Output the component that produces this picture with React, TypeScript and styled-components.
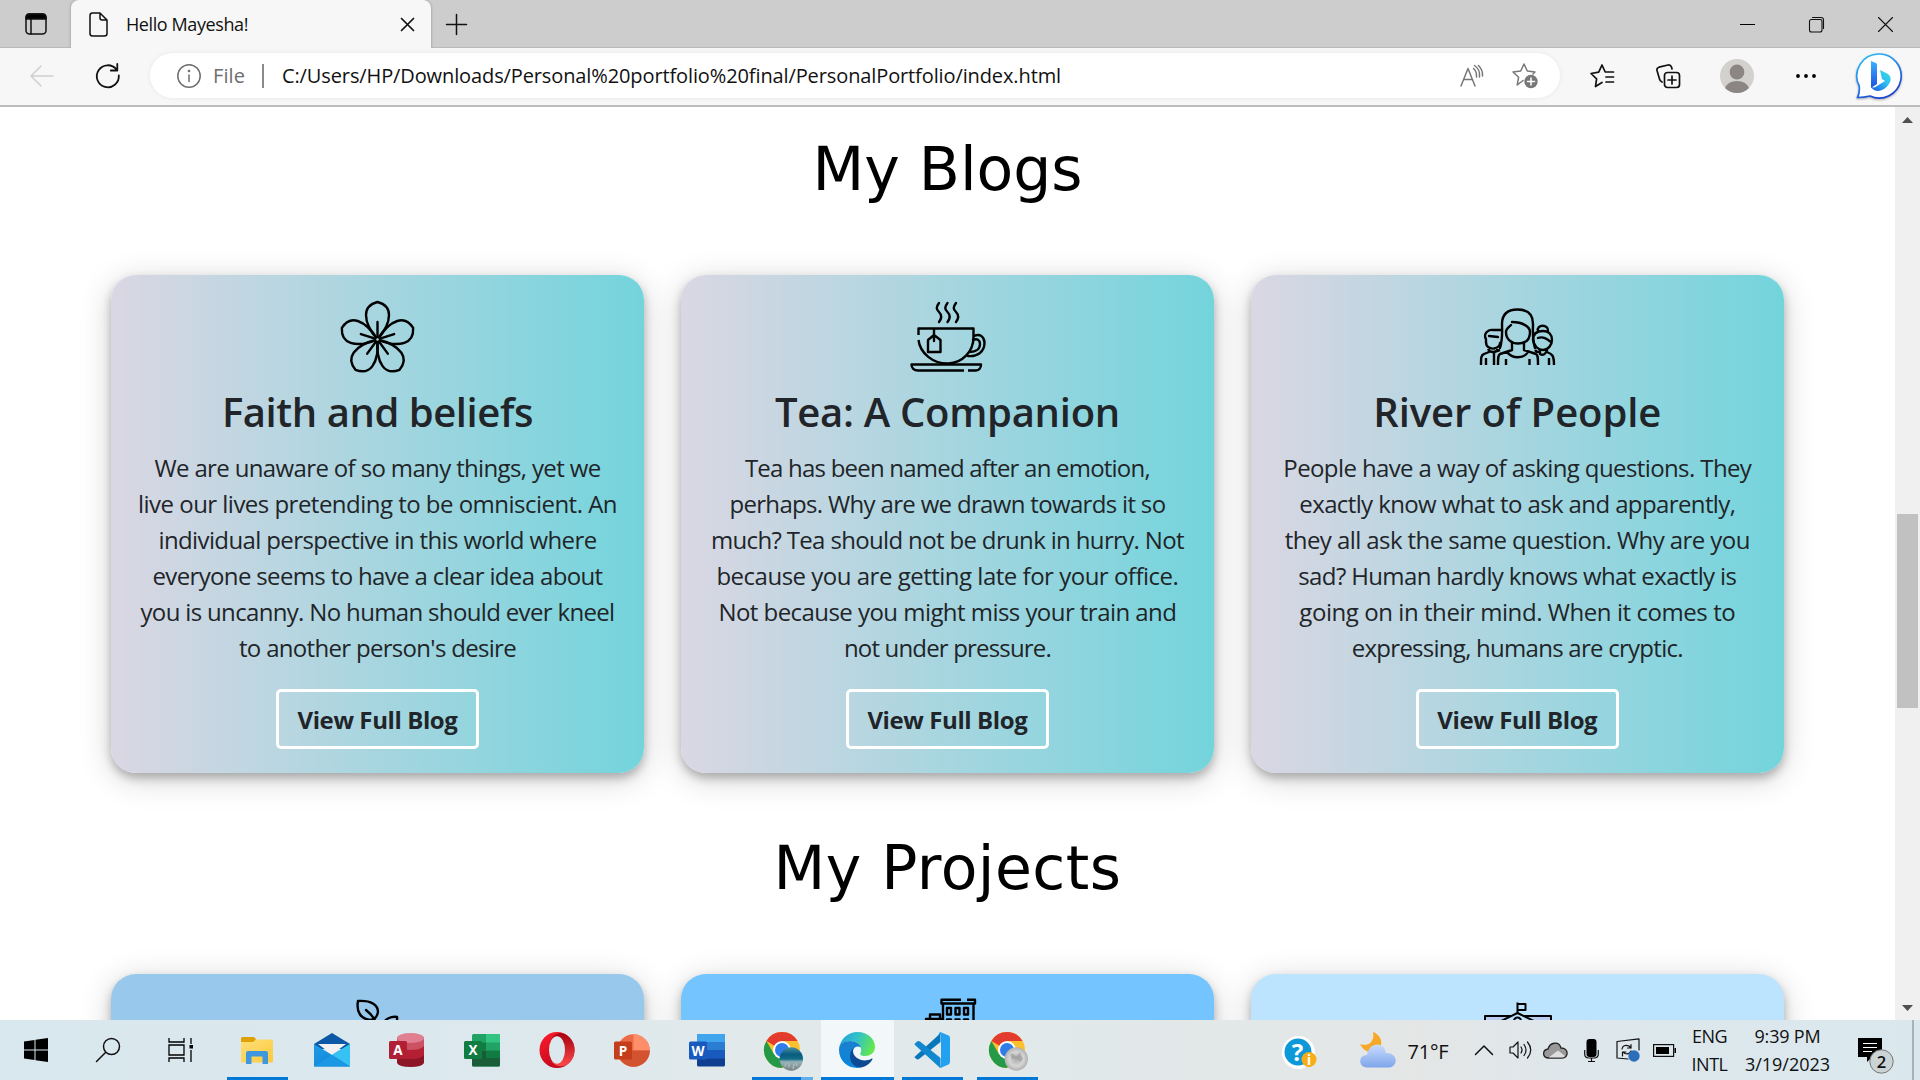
import React, { useLayoutEffect, useRef, useState } from "react";
import styled, { createGlobalStyle } from "styled-components";

const GlobalStyle = createGlobalStyle`
  *, *::before, *::after { box-sizing: border-box; }
  html, body { margin: 0; padding: 0; overflow: hidden; background: #fff; }
  body { font-family: "Open Sans", "Noto Sans", sans-serif; color: #212529; }
  svg { display: block; flex: none; overflow: visible; }
`;

/* ---------- text that tracks itself to a given measure ---------- */

const FitSpan = styled.span`
  display: inline-block;
  white-space: nowrap;
`;

function Fit({ children, width }: { children: string; width: number }) {
  const ref = useRef<HTMLSpanElement>(null);
  const [spacing, setSpacing] = useState(0);
  useLayoutEffect(() => {
    if (ref.current) {
      const natural = ref.current.getBoundingClientRect().width;
      setSpacing((width - natural) / children.length);
    }
  }, [children, width]);
  return (
    <FitSpan ref={ref} style={{ letterSpacing: `${spacing.toFixed(3)}px` }}>
      {children}
    </FitSpan>
  );
}

/* ---------- window ---------- */

const Screen = styled.div`
  width: 1920px;
  height: 1080px;
  display: grid;
  grid-template-columns: 1920px;
  grid-template-rows: 48px 59px 913px 60px;
  overflow: hidden;
`;

const TabStrip = styled.header`
  display: flex;
  background: #cdcdcd;
  box-shadow: inset 0 -1px 0 #b9b9b9;
`;

const Slot = styled.div<{ $w: number; $h?: number; $drop?: number }>`
  width: ${(p) => p.$w}px;
  ${(p) => (p.$h ? `height: ${p.$h}px;` : "")}
  padding-top: ${(p) => p.$drop || 0}px;
  flex: none;
  display: flex;
  align-items: center;
  justify-content: center;
`;

const Tab = styled.div`
  width: 360px;
  height: 48px;
  display: flex;
  align-items: center;
  padding-left: 18px;
  background: #f7f7f7;
  border-radius: 8px 8px 0 0;
  box-shadow: 0 0 3px rgba(0, 0, 0, 0.3);
  clip-path: inset(0 -4px 0 -4px);
`;

const TabTitle = styled.div`
  flex: 1;
  margin-left: 18px;
  padding-bottom: 1px;
  font-size: 18px;
  line-height: 24px;
  color: #111;
`;

const Spacer = styled.div`
  flex: 1;
`;

const Toolbar = styled.div`
  display: flex;
  align-items: center;
  padding-bottom: 2px;
  background: #f7f7f7;
  border-bottom: 2px solid #bdbdbd;
`;

const AddressBar = styled.div`
  width: 1410px;
  height: 45px;
  flex: none;
  display: flex;
  align-items: center;
  padding: 1px 8px 0 27px;
  border-radius: 23px;
  background: #fff;
  box-shadow: 0 0 5px rgba(0, 0, 0, 0.07);
  font-size: 20px;
  line-height: 28px;
  color: #111;
`;

const Scheme = styled.span`
  margin-left: 12px;
  color: #6e6e6e;
`;

const Divider = styled.i`
  width: 2px;
  height: 24px;
  margin: 0 18px 0 17px;
  background: #8a8a8a;
`;

/* ---------- page ---------- */

const Viewport = styled.div`
  display: grid;
  grid-template-columns: 1895px 25px;
  overflow: hidden;
`;

const Page = styled.main`
  height: 913px;
  overflow: hidden;
  background: #fff;
`;

const SectionTitle = styled.h1<{ $top: number; $track?: number }>`
  margin: 0;
  padding: ${(p) => p.$top}px 0 70px;
  font: 400 60px/72px Verdana, "DejaVu Sans", sans-serif;
  letter-spacing: ${(p) => p.$track || 0}px;
  text-align: center;
  color: #000;
`;

const CardRow = styled.div`
  display: grid;
  grid-template-columns: repeat(3, 533.4px);
  justify-content: space-between;
  padding: 0 111px 0 110.8px;
`;

const Card = styled.article<{ $fill: string }>`
  height: 498px;
  padding-top: 24.5px;
  display: flex;
  flex-direction: column;
  align-items: center;
  border-radius: 25px;
  background: ${(p) => p.$fill};
  box-shadow: 0 5px 10px rgba(0, 0, 0, 0.25), 0 6px 32px rgba(0, 0, 0, 0.18);
`;

const CardTitle = styled.h2`
  margin: 13px 0 14.5px;
  font-size: 40px;
  font-weight: 600;
  line-height: 48px;
`;

const CardText = styled.p`
  margin: 0 0 22.5px;
  display: flex;
  flex-direction: column;
  align-items: center;
  font-size: 24px;
  line-height: 36px;
`;

const BlogButton = styled.button`
  width: 203px;
  height: 60px;
  padding: 2px 0 0;
  border: 3px solid #fff;
  border-radius: 5px;
  background: transparent;
  color: #212529;
  font: 700 24px/36px "Open Sans", "Noto Sans", sans-serif;
`;

const ScrollTrack = styled.aside`
  height: 913px;
  display: flex;
  flex-direction: column;
  align-items: center;
  background: #f0f0f0;
`;

const Thumb = styled.div`
  width: 21px;
  height: 194px;
  margin-top: 381px;
  margin-bottom: auto;
  background: #c1c1c1;
`;

/* ---------- taskbar ---------- */

const Taskbar = styled.footer`
  display: flex;
  background: linear-gradient(90deg, #d9e8ee 0, #dbe8ee 420px, #e1e9eb 720px, #e1e9ea 1050px, #e4e6e6 1420px, #dde7ec 1600px, #dae8ed 1920px);
`;

const AppSlot = styled.div<{ $line?: string; $active?: boolean }>`
  width: 73px;
  height: 60px;
  margin: 0 1px;
  padding-right: 2px;
  flex: none;
  display: flex;
  align-items: center;
  justify-content: center;
  background: ${(p) =>
    `linear-gradient(90deg, ${p.$line || "transparent, transparent"}) center bottom / ${p.$active ? 73 : 61}px 3px no-repeat, ${p.$active ? "#f2f7f9" : "transparent"}`};
`;

const TrayText = styled.div<{ $size: number; $w: number; $drop: number }>`
  width: ${(p) => p.$w}px;
  padding-top: ${(p) => p.$drop}px;
  flex: none;
  display: flex;
  flex-direction: column;
  justify-content: center;
  align-items: center;
  font-size: ${(p) => p.$size}px;
  line-height: 27.5px;
  color: #111;
`;

const DesktopEdge = styled.i`
  width: 2px;
  height: 60px;
  margin-right: 6px;
  background: #a5b4bb;
`;

/* ---------- card drawings ---------- */

const line = { fill: "none", stroke: "#000", strokeWidth: 2.4, strokeLinecap: "round", strokeLinejoin: "round" } as const;

const Flower = () => (
  <svg width="75" height="75" viewBox="0 0 75 75" {...line}>
    {[0, 72, 144, 216, 288].map((a) => (
      <g key={a} transform={`rotate(${a} 37.5 39.5)`}>
        <path d="M37.5 39.500C31 32 26 24 26 15C26 8 30 4 37.5 2C45 4 49 8 49 15C49 24 44 32 37.5 39.500Z" />
        <path d="M37.5 37V22" />
      </g>
    ))}
    <circle cx="37.5" cy="39.500" r="1.2" fill="#b5dfe5" stroke="none" />
  </svg>
);

const Tea = () => (
  <svg width="75" height="75" viewBox="0 0 75 75" {...line}>
    <path d="M29 3c-3 4-3 6 0 9s3 6 0 10M37.5 3c-3 4-3 6 0 9s3 6 0 10M46 3c-3 4-3 6 0 9s3 6 0 10" />
    <path d="M8.500 35V28.500H63.500V37C63.500 52 52 63 38.500 63.500C23 64 10 53 8.500 40" strokeLinecap="butt" />
    <path d="M64 36C70 33 74.500 37 74.500 43C74.500 52 67 57 58 56M63 40C67 38 70 40 70 44C70 49 66 52 60 52" />
    <path d="M24 29V41M18 40L24 35L30.500 40V52H18Z" strokeLinejoin="round" />
    <path d="M54 70.500H8C4 70.500 1.500 68 1.500 64.500H71C71 68 69 70.500 66 70.500H58" strokeLinecap="butt" />
  </svg>
);

const People = () => (
  <svg width="75" height="75" viewBox="0 0 75 75" {...line}>
    <path d="M20 48C23 38 22 30 22 24C22 14 28 9.500 37.500 9.500S53 14 53 24C53 30 52 38 55 48" />
    <path d="M32 22C43 22 50 27 50 32C50 40 45 43.500 38 43.500S26 39 26 32C26 29 28 28 31 25" />
    <path d="M32 43V50L20 54C18 55 18 58 18 65M44 43V50L56 54C58 55 58 58 58 65M27 52C32 59 44 59 48 52M26 59V65M49.500 59V65" strokeLinecap="butt" />
    <path d="M21 30H13C8 29 3 34 6 39V42C6 47 10 49 14 48.500C17 48 20 46 20 43M9 36L18 37" />
    <path d="M9 49V52L4 54C1 55 1 58 1 65M8 49C10 53 16 53 18 49M14 53V65M6 58V65M14 52L20 50" strokeLinecap="butt" />
    <path d="M53 40C53 34 57 31 63 31S72 35 72 40S68 50 63 50S54 46 53 40M58 38C63 36 67 39 71 42M58 31C56 24 69 24 68 31M60 50V54C63 56 66 54 67 50" />
    <path d="M67 52C72 54 74 55 74 65M69 58V65M55 50C57 53 59 52 60 51" strokeLinecap="butt" />
  </svg>
);

const Leaves = () => (
  <svg width="75" height="75" viewBox="0 0 75 75" {...line}>
    <path d="M18 2C31 1 38 6 38 13C37 18 34 21 30 21C21 20 16 13 18 2ZM26 11C32 16 36 20 37 30M43 25C45 20 51 17 57 18C58 27 52 34 42 34M16 34Q28 32 37 40V74" />
  </svg>
);

const Offices = () => (
  <svg width="75" height="75" viewBox="0 0 75 75" {...line} strokeLinecap="butt">
    <path d="M57 .8H65V4.500H31.500V.8H51M33 4.500V74M63.500 4.500V74M20 19V15.500H30V19M11 74V25H16V20H33" />
    {[9, 20.500, 32, 43].map((y) => (
      <path key={y} d={`M37 ${y}h4v6.500h-4zM45.500 ${y}h4v6.500h-4zM54 ${y}h4v6.500h-4z`} />
    ))}
  </svg>
);

const School = () => (
  <svg width="75" height="75" viewBox="0 0 75 75" {...line} strokeWidth={2} strokeLinecap="butt">
    <path d="M5 17H71V70H5Z" fill="#b9cdf4" />
    <path d="M37.500 14L17 24V70H58V24Z" fill="#bce4ff" />
    <path d="M37.500 14V3.500M37.500 5H45.500V11H37.500" />
    <circle cx="37.500" cy="22" r="3.500" />
  </svg>
);

/* ---------- browser drawings ---------- */

const ink = { fill: "none", stroke: "#111", strokeWidth: 1.5, strokeLinecap: "round", strokeLinejoin: "round" } as const;

const TabActionsIcon = () => (
  <svg width="22" height="22" viewBox="0 0 22 22" {...ink}>
    <rect x="1" y="1" width="20" height="20" rx="3.500" />
    <path d="M1 6V4.500Q1 1 4.500 1H17.500Q21 1 21 4.500V6Z" fill="#000" />
    <path d="M6 6V21" />
  </svg>
);
const FileIcon = () => (
  <svg width="19" height="25" viewBox="0 0 19 25" {...ink}>
    <path d="M3 1H11L18 8V21.500Q18 24 15.500 24H3.500Q1 24 1 21.500V3.500Q1 1 3.500 1M11 1V6Q11 8 13 8H18" />
  </svg>
);
const CrossIcon = ({ size = 13, w = 1.7 }: { size?: number; w?: number }) => (
  <svg width={size} height={size} viewBox={`0 0 ${size} ${size}`} {...ink} strokeWidth={w}>
    <path d={`M.5 .5L${size - 0.5} ${size - 0.5}M${size - 0.5} .5L.5 ${size - 0.5}`} />
  </svg>
);
const PlusIcon = () => (
  <svg width="21" height="21" viewBox="0 0 21 21" {...ink}>
    <path d="M10.500 .5V20.500M.5 10.500H20.500" />
  </svg>
);
const MinIcon = () => (
  <svg width="15" height="15" viewBox="0 0 15 15"><path d="M0 7.500H15" stroke="#000" strokeWidth="1" /></svg>
);
const RestoreIcon = () => (
  <svg width="15" height="15" viewBox="0 0 15 15" {...ink} strokeWidth={1.1}>
    <rect x=".5" y="2.500" width="12.500" height="12.500" rx="2" />
    <path d="M3.500 .5H12Q14.500 .5 14.500 3V11.500" />
  </svg>
);
const BackIcon = () => (
  <svg width="24" height="22" viewBox="0 0 24 22" {...ink} stroke="#cfcfcf"><path d="M23 11H1M11 1L1 11L11 21" /></svg>
);
const ReloadIcon = () => (
  <svg width="25" height="25" viewBox="0 0 25 25" {...ink} strokeWidth={1.8}>
    <path d="M21.500 6.500A11 11 0 1 0 23.800 12.500M22.300 1V7.500H15.800" />
  </svg>
);
const InfoIcon = () => (
  <svg width="24" height="24" viewBox="0 0 24 24" {...ink} stroke="#6e6e6e">
    <circle cx="12" cy="12" r="11.200" /><path d="M12 11V17.500" /><circle cx="12" cy="7" r=".6" fill="#6e6e6e" />
  </svg>
);
const ReadAloudIcon = () => (
  <svg width="23" height="22" viewBox="0 0 23 22" {...ink} stroke="#777">
    <path d="M1 21L8 3.500L15 21M3.500 14.500H12.500M13.500 3.500Q17 6.500 16.500 12M14.500 .5Q20.500 4.500 19.500 12M18.500 .5Q23 5 22.500 11" />
  </svg>
);
const AddFavIcon = () => (
  <svg width="26" height="26" viewBox="0 0 26 26" {...ink} stroke="#777">
    <path d="M11 17.500L5.200 22L6.600 14.300L1 9L8.700 8L12 1L15.300 8L23 9L21 11" />
    <circle cx="19" cy="18.500" r="6.700" fill="#777" stroke="none" />
    <path d="M19 15V22M15.500 18.500H22.500" stroke="#fff" />
  </svg>
);
const FavoritesIcon = () => (
  <svg width="24" height="24" viewBox="0 0 24 24" {...ink} strokeWidth={1.7}>
    <path d="M12 18.500L5.500 22.500L6.600 14.800L1 9.500L8.700 8.200L12 1L15.200 8H23.500M16 13H23.500M16 18H23.500" />
  </svg>
);
const CollectionsIcon = () => (
  <svg width="24" height="24" viewBox="0 0 24 24" {...ink} strokeWidth={1.7}>
    <rect x="8.500" y="8.500" width="15" height="15" rx="3" />
    <path d="M16 12V20M12 16H20M6 18Q4 17 3.500 15L1 6.500Q.5 4 3 3.200L12 1Q14.500 .5 15.500 3L16 5" />
  </svg>
);
const Avatar = () => (
  <svg width="34" height="34" viewBox="0 0 34 34">
    <circle cx="17" cy="17" r="17" fill="#d3d1ce" />
    <circle cx="17" cy="13" r="7.400" fill="#8b8683" />
    <path d="M5 29Q8 22 17 22T29 29Q24 34 17 34T5 29Z" fill="#8b8683" />
  </svg>
);
const DotsIcon = () => (
  <svg width="20" height="4" viewBox="0 0 20 4"><circle cx="2" cy="2" r="1.900" /><circle cx="10" cy="2" r="1.900" /><circle cx="18" cy="2" r="1.900" /></svg>
);
const BingIcon = () => (
  <svg width="46" height="46" viewBox="0 0 46 46">
    <defs>
      <linearGradient id="bing-ring" x1="0" y1="0" x2=".5" y2="1"><stop stopColor="#20c8f5" /><stop offset=".5" stopColor="#2a8af0" /><stop offset="1" stopColor="#1b45d0" /></linearGradient>
      <linearGradient id="bing-stem" x1="0" y1="0" x2="0" y2="1"><stop stopColor="#3cb2ff" /><stop offset="1" stopColor="#1a50e0" /></linearGradient>
      <linearGradient id="bing-bowl" x1="0" y1="1" x2="1" y2="0"><stop stopColor="#1b56e0" /><stop offset=".6" stopColor="#2fc2f2" /><stop offset="1" stopColor="#38dde0" /></linearGradient>
    </defs>
    <path d="M23 1A22 22 0 1 1 14 43Q8 44.500 1.500 44.500Q4 39 3.200 33A22 22 0 0 1 23 1Z" fill="#fff" stroke="url(#bing-ring)" strokeWidth="1.700" filter="drop-shadow(0 1px 1px #aaa)" />
    <path d="M15 8L20 10Q21 10.500 21 12V31L15 35Z" fill="url(#bing-stem)" />
    <path d="M24 17L32 21Q36 24 34 29Q31 36 23 38Q16 38 15 33Q17 36 21 33L29 28L26 26Z" fill="url(#bing-bowl)" />
  </svg>
);
const Arrow = ({ down }: { down?: boolean }) => (
  <svg width="11" height="6" viewBox="0 0 11 6"><path d={down ? "M0 0H11L5.500 6Z" : "M0 6H11L5.500 0Z"} fill="#505050" /></svg>
);

/* ---------- taskbar drawings ---------- */

const WindowsIcon = () => (
  <svg width="24" height="24" viewBox="0 0 24 24"><path d="M0 3.500L10.500 2V11.500H0ZM11.500 1.800L24 0V11.500H11.500ZM0 12.500H10.500V22L0 20.600ZM11.500 12.500H24V24L11.500 22.200Z" /></svg>
);
const SearchIcon = () => (
  <svg width="24" height="24" viewBox="0 0 24 24" {...ink}><circle cx="15.500" cy="8.500" r="8" /><path d="M9.500 14.500L.5 23.500" /></svg>
);
const TaskViewIcon = () => (
  <svg width="25" height="24" viewBox="0 0 25 24" fill="none" stroke="#000" strokeWidth="1.300">
    <path d="M1 0V4H16V0M1 24V20H16V24M1 7H16V17H1ZM23 0V6M23 12V24" /><path d="M21.500 7H25V10.500H21.500Z" fill="#000" stroke="none" />
  </svg>
);
const FolderIcon = () => (
  <svg width="32" height="27" viewBox="0 0 32 27">
    <defs><linearGradient id="folder" x1="0" y1="0" x2="1" y2="1"><stop stopColor="#ffdf7a" /><stop offset="1" stopColor="#fbc93d" /></linearGradient></defs>
    <path d="M0 6V1.500Q0 0 1.500 0H13L15 2L13 6Z" fill="#e0a106" />
    <path d="M0 5H12L15 2.500H30.500Q32 2.500 32 4V24Q32 25.500 30.500 25.500H1.500Q0 25.500 0 24Z" fill="url(#folder)" />
    <path d="M5 27V16Q5 14 7 14H25Q27 14 27 16V27H21.500V19.500H10.500V27Z" fill="#3f97dd" />
  </svg>
);
const MailIcon = () => (
  <svg width="36" height="34" viewBox="0 0 36 34">
    <defs><linearGradient id="mail" x1="0" y1="0" x2="1" y2="1"><stop stopColor="#1c9be6" /><stop offset="1" stopColor="#1181d8" /></linearGradient></defs>
    <path d="M0 11L18 0L36 11V16H0Z" fill="#0a58a6" />
    <path d="M0 11L18 22L36 11V33.500H0Z" fill="url(#mail)" />
    <path d="M18 22L36 11V33.500Z" fill="#36c3f3" /><path d="M18 22L0 33.500H36Z" fill="#1b98e4" />
    <path d="M4 11H32L18 21.500Z" fill="#f1f1f3" />
  </svg>
);

const letterFont = { fontFamily: '"Open Sans", sans-serif', fontWeight: 700, fontSize: 13.5, fill: "#fff", stroke: "none", textAnchor: "middle" } as const;
const LetterTile = ({ letter, fill, y = 8 }: { letter: string; fill: string; y?: number }) => (
  <g><rect x="0" y={y} width="18" height="18" rx="1.500" fill={fill} /><text x="9" y={y + 14} {...letterFont}>{letter}</text></g>
);
const AccessIcon = () => (
  <svg width="36" height="34" viewBox="0 0 36 34">
    <path d="M8 4V30Q10 34 21.500 34T35 30V4Z" fill="#8c1526" /><path d="M8 4V22Q11 26 21.500 26T35 22V4Z" fill="#b32034" />
    <path d="M8 4V13Q11 17 21.500 17T35 13V4Z" fill="#cb5163" /><ellipse cx="21.500" cy="5" rx="13.500" ry="5" fill="#e07f91" />
    <LetterTile letter="A" fill="#b11f37" />
  </svg>
);
const ExcelIcon = () => (
  <svg width="36" height="33" viewBox="0 0 36 33">
    <rect x="8" width="28" height="32.500" rx="1.500" fill="#21a366" /><path d="M22 0H34.500Q36 0 36 1.500V8.500H22Z" fill="#33c481" />
    <path d="M8 16.500H22V24.500H8Z" fill="#185c37" /><path d="M22 16.500H36V24.500H22Z" fill="#107c41" /><path d="M8 8.500H22V16.500H8Z" fill="#107c41" />
    <path d="M8 24H36V31Q36 32.500 34.500 32.500H9.500Q8 32.500 8 31Z" fill="#1a5d39" />
    <LetterTile letter="X" fill="#107c41" y={7} />
  </svg>
);
const OperaIcon = () => (
  <svg width="36" height="36" viewBox="0 0 36 36">
    <defs><linearGradient id="opera" x1="0" y1="0" x2=".5" y2="1"><stop stopColor="#ff1b2d" /><stop offset="1" stopColor="#c00a1c" /></linearGradient><linearGradient id="opera-in" x1="0" y1="0" x2="0" y2="1"><stop stopColor="#a50010" /><stop offset="1" stopColor="#ff4b4b" /></linearGradient></defs>
    <path d="M18 0A17.500 18 0 1 0 18 36A17.500 18 0 1 0 18 0Z" fill="url(#opera)" />
    <path d="M13 6C18 -1 26 1 30 5C38 12 37 25 30 31C25 35 18 36 13 30Z" fill="url(#opera-in)" />
    <ellipse cx="18" cy="18" rx="8" ry="13.700" fill="#dbe8ee" />
  </svg>
);
const PowerPointIcon = () => (
  <svg width="36" height="33" viewBox="0 0 36 33">
    <circle cx="19.500" cy="16.500" r="16.300" fill="#ed6c47" /><path d="M19.500 .2A16.300 16.300 0 0 1 35.800 16.500H19.500Z" fill="#ff8f6b" />
    <path d="M3.200 16.500H35.800A16.300 16.300 0 0 1 3.200 16.500Z" fill="#d35230" /><LetterTile letter="P" fill="#c43e1c" y={7.500} />
  </svg>
);
const WordIcon = () => (
  <svg width="36" height="33" viewBox="0 0 36 33">
    <rect x="8" width="28" height="32.500" rx="1.500" fill="#103f91" /><path d="M8 8V1.500Q8 0 9.500 0H34.500Q36 0 36 1.500V8Z" fill="#41a5ee" />
    <path d="M8 8H36V16.500H8Z" fill="#2b7cd3" /><path d="M8 16.500H36V24.500H8Z" fill="#185abd" /><LetterTile letter="W" fill="#185abd" y={7.500} />
  </svg>
);
const ChromeIcon = ({ badge }: { badge: "sea" | "moon" }) => (
  <svg width="36" height="36" viewBox="0 0 36 36">
    <defs>
      <linearGradient id="sea" x1="0" y1="0" x2="0" y2="1"><stop stopColor="#4a8d9c" /><stop offset=".3" stopColor="#075d80" /><stop offset=".5" stopColor="#126b88" /><stop offset=".62" stopColor="#95b3b8" /><stop offset="1" stopColor="#777f83" /></linearGradient>
      <radialGradient id="moon"><stop stopColor="#aaa" /><stop offset=".6" stopColor="#d6d6d6" /><stop offset="1" stopColor="#b0b0b0" /></radialGradient>
    </defs>
    <circle cx="18" cy="18" r="18" fill="#fbc02d" />
    <path d="M18 18L2.400 9A18 18 0 0 1 33.600 9H18Z" fill="#e33b2e" />
    <path d="M2.400 9A18 18 0 0 0 18 36L25.800 22.500L18 18L10.200 22.500Z" fill="#249a48" />
    <circle cx="18" cy="18" r="9" fill="#fff" /><circle cx="18" cy="18" r="7" fill="#2f7de9" />
    <circle cx="27.300" cy="27" r="11.700" fill={`url(#${badge})`} />
    {badge === "sea" ? <path d="M21 34.500L22 31M25 35.500V31M29 37L30 32M33 34L32 31" stroke="#b5bcbe" fill="none" strokeWidth="1.300" /> : <path d="M21 23Q24 19 27 25L31 20L34 27L31 30L28 26L23 27Z" fill="#848484" opacity=".45" />}
  </svg>
);
const EdgeIcon = () => (
  <svg width="36" height="36" viewBox="0 0 36 36">
    <defs>
      <linearGradient id="edge-top" x1="0" y1=".2" x2="1" y2=".5"><stop stopColor="#1fa2df" /><stop offset=".5" stopColor="#33c3c5" /><stop offset="1" stopColor="#65e84c" /></linearGradient>
      <linearGradient id="edge-left" x1="0" y1="0" x2="0" y2="1"><stop stopColor="#1b7fce" /><stop offset="1" stopColor="#0b86dd" /></linearGradient>
    </defs>
    <path d="M0 17C1 7 9 0 18.500 0C29 0 36 7 36 15C36 21 31 24 26 24C22 24 20.500 22.500 21.500 21C24 16 20 9 11 9C5 9 1 13 0 17Z" fill="url(#edge-top)" />
    <path d="M0 18C0 12 5 9 11 9C17 9 21 12 22 15.500C17 12.500 13.500 17 13.500 21C13.500 28 18 33 22 35.500C11 38 0 30 0 18Z" fill="url(#edge-left)" />
    <path d="M14.500 16C10 20 9 29 16 34C23 38 30 33 33 28C34 27 33.500 26 32 27C24 31 14 26 14 19Z" fill="#0c4b94" />
  </svg>
);
const CodeIcon = () => (
  <svg width="36" height="36" viewBox="0 0 36 36">
    <path d="M1 24.500L24 3.500L26.500 0V10L5 27Q3.500 28 2 26.500L.5 25.500Z" fill="#0876ba" />
    <path d="M1 11.500L3 9.500Q4.500 8.500 6 9.500L26.500 26V36L24 34L1 13Q0 12 1 11.500Z" fill="#1087cf" />
    <path d="M25 .8Q26 0 27.500 .5L34.500 3.500Q36 4.200 36 6V30Q36 31.500 34.500 32.400L27.500 35.500Q26 36 25 35.200L27 33V3Z" fill="#22a1f1" />
  </svg>
);
const HelpIcon = () => (
  <svg width="34" height="33" viewBox="0 0 34 33">
    <circle cx="16.500" cy="16.500" r="16.500" fill="#fff" /><circle cx="16" cy="16" r="13.500" fill="#0d98d8" />
    <text x="15.500" y="24.500" {...letterFont} fontSize="24">?</text>
    <circle cx="27" cy="23.500" r="7.500" fill="#f6ad18" /><text x="27" y="28.500" {...letterFont}>i</text>
  </svg>
);
const WeatherIcon = () => (
  <svg width="36" height="36" viewBox="0 0 36 36">
    <defs><linearGradient id="cloud" x1="0" y1="0" x2="0" y2="1"><stop stopColor="#c9dcff" /><stop offset="1" stopColor="#7fa5ea" /></linearGradient></defs>
    <path d="M13 0C24 4 24 18 14 20C8 21 3 18 0 12C8 15 15 10 13 0Z" fill="#f7a827" />
    <path d="M7 35.500C-2 35 -2 23 7 23C9 10 24 9 26 21C39 21 38 35 29 35.500Z" fill="url(#cloud)" />
  </svg>
);
const ChevronIcon = () => (<svg width="18" height="10" viewBox="0 0 18 10" {...ink}><path d="M.5 9.500L9 1L17.500 9.500" /></svg>);
const SpeakerIcon = () => (
  <svg width="23" height="18" viewBox="0 0 23 18" {...ink} strokeWidth={1.2}><path d="M1 6H4L9 1V17L4 12H1ZM12 6Q14 9 12 12M15 3.500Q19 9 15 14.500M18.500 1Q25 9 18.500 17" /></svg>
);
const CloudIcon = () => (
  <svg width="25" height="17" viewBox="0 0 25 17" stroke="#222" strokeWidth="1.300"><path d="M6 16C-1 16 -1 8 5 7C7 0 16 -1 18 6C26 6 26 16 19 16Z" fill="#999" /><path d="M6 15.300L15 8.500L22 14Q21 15.500 19 15.500H6Z" fill="#ddd" stroke="none" /></svg>
);
const MicIcon = () => (
  <svg width="15" height="23" viewBox="0 0 15 23"><rect x="2.500" width="10" height="18" rx="3" /><path d="M.7 11V15Q.7 19 5 19H10Q14.300 19 14.300 15V11M7.500 19V22.500M4 22.500H11" fill="none" stroke="#111" strokeWidth="1.200" /></svg>
);
const SyncIcon = () => (
  <svg width="24" height="24" viewBox="0 0 24 24" {...ink} strokeWidth={1.2}>
    <path d="M12 21L1 20V3.500L23 .8V12M6 11Q7 6 13 8L15 10M15 6.500V10H11.500M15 13Q13 17 9 15.500L7 14M6.500 18V14H10" /><circle cx="18" cy="18" r="5.700" fill="#2b6fba" stroke="none" />
  </svg>
);
const BatteryIcon = () => (
  <svg width="23" height="13" viewBox="0 0 23 13"><rect x=".6" y=".6" width="20" height="11.800" fill="none" stroke="#111" strokeWidth="1.200" /><path d="M3 3H16V10H3ZM21.500 4H23V9H21.500Z" /></svg>
);
const NotificationIcon = () => (
  <svg width="37" height="36" viewBox="0 0 37 36">
    <path d="M0 0H24V19H14L9 24V19H0Z" /><path d="M5 5.500H19M5 9.500H19M5 13.500H14" stroke="#fff" strokeWidth="1.200" />
    <circle cx="23.500" cy="23.500" r="11.700" fill="#ccd3d5" stroke="#777" /><text x="23.500" y="29.500" {...letterFont} fontWeight="600" fontSize="16.500" fill="#111">2</text>
  </svg>
);

/* ---------- content ---------- */

type Line = [string, number];
const blogFill = "linear-gradient(90deg, #dad7e3 0%, #73d4dc 100%)";

const blogs: { icon: React.ReactNode; title: Line; lines: Line[] }[] = [
  {
    icon: <Flower />,
    title: ["Faith and beliefs", 311],
    lines: [
      ["We are unaware of so many things, yet we", 446],
      ["live our lives pretending to be omniscient. An", 479],
      ["individual perspective in this world where", 438],
      ["everyone seems to have a clear idea about", 450],
      ["you is uncanny. No human should ever kneel", 474],
      ["to another person's desire", 277],
    ],
  },
  {
    icon: <Tea />,
    title: ["Tea: A Companion", 345],
    lines: [
      ["Tea has been named after an emotion,", 405],
      ["perhaps. Why are we drawn towards it so", 436],
      ["much? Tea should not be drunk in hurry. Not", 473],
      ["because you are getting late for your office.", 462],
      ["Not because you might miss your train and", 458],
      ["not under pressure.", 207],
    ],
  },
  {
    icon: <People />,
    title: ["River of People", 288],
    lines: [
      ["People have a way of asking questions. They", 468],
      ["exactly know what to ask and apparently,", 436],
      ["they all ask the same question. Why are you", 465],
      ["sad? Human hardly knows what exactly is", 438],
      ["going on in their mind. When it comes to", 436],
      ["expressing, humans are cryptic.", 331],
    ],
  },
];

const BLUE = "#0078d7, #0078d7";
const apps: { icon: React.ReactNode; line?: string; active?: boolean }[] = [
  { icon: <FolderIcon />, line: BLUE },
  { icon: <MailIcon /> },
  { icon: <AccessIcon /> },
  { icon: <ExcelIcon /> },
  { icon: <OperaIcon /> },
  { icon: <PowerPointIcon /> },
  { icon: <WordIcon /> },
  { icon: <ChromeIcon badge="sea" />, line: "#0078d7 80%, #62aeea 80%" },
  { icon: <EdgeIcon />, line: BLUE, active: true },
  { icon: <CodeIcon />, line: BLUE },
  { icon: <ChromeIcon badge="moon" />, line: BLUE },
];

export default function App() {
  return (
    <Screen>
      <GlobalStyle />
      <TabStrip>
        <Slot $w={71}><TabActionsIcon /></Slot>
        <Tab>
          <FileIcon />
          <TabTitle><Fit width={122}>Hello Mayesha!</Fit></TabTitle>
          <Slot $w={48} $drop={1}><CrossIcon /></Slot>
        </Tab>
        <Slot $w={51}><PlusIcon /></Slot>
        <Spacer />
        <Slot $w={69}><MinIcon /></Slot>
        <Slot $w={69}><RestoreIcon /></Slot>
        <Slot $w={69}><CrossIcon size={15} w={1.1} /></Slot>
      </TabStrip>

      <Toolbar>
        <Slot $w={84}><BackIcon /></Slot>
        <Slot $w={47}><ReloadIcon /></Slot>
        <Slot $w={19} />
        <AddressBar>
          <InfoIcon />
          <Scheme><Fit width={32}>File</Fit></Scheme>
          <Divider />
          <Fit width={779}>C:/Users/HP/Downloads/Personal%20portfolio%20final/PersonalPortfolio/index.html</Fit>
          <Spacer />
          <Slot $w={53}><ReadAloudIcon /></Slot>
          <Slot $w={54}><AddFavIcon /></Slot>
        </AddressBar>
        <Slot $w={84}><FavoritesIcon /></Slot>
        <Slot $w={48}><CollectionsIcon /></Slot>
        <Slot $w={90}><Avatar /></Slot>
        <Slot $w={48}><DotsIcon /></Slot>
        <Slot $w={7} />
        <Slot $w={83}><BingIcon /></Slot>
      </Toolbar>

      <Viewport>
        <Page>
          <SectionTitle $top={26}>My Blogs</SectionTitle>
          <CardRow>
            {blogs.map((b) => (
              <Card key={b.title[0]} $fill={blogFill}>
                {b.icon}
                <CardTitle><Fit width={b.title[1]}>{b.title[0]}</Fit></CardTitle>
                <CardText>
                  {b.lines.map(([text, w]) => <Fit key={text} width={w}>{text}</Fit>)}
                </CardText>
                <BlogButton><Fit width={160}>View Full Blog</Fit></BlogButton>
              </Card>
            ))}
          </CardRow>
          <SectionTitle $top={59} $track={0.45}>My Projects</SectionTitle>
          <CardRow>
            <Card $fill="#98c9ec"><Leaves /></Card>
            <Card $fill="#74c4ff"><Offices /></Card>
            <Card $fill="#bce4ff"><School /></Card>
          </CardRow>
        </Page>
        <ScrollTrack>
          <Slot $w={25} $h={26}><Arrow /></Slot>
          <Thumb />
          <Slot $w={25} $h={24}><Arrow down /></Slot>
        </ScrollTrack>
      </Viewport>

      <Taskbar>
        <Slot $w={72}><WindowsIcon /></Slot>
        <Slot $w={72}><SearchIcon /></Slot>
        <Slot $w={72}><TaskViewIcon /></Slot>
        <Slot $w={4} />
        {apps.map((a, i) => (
          <AppSlot key={i} $line={a.line} $active={a.active}>{a.icon}</AppSlot>
        ))}
        <Spacer />
        <Slot $w={44} $drop={4}><HelpIcon /></Slot>
        <Slot $w={34} />
        <Slot $w={46}><WeatherIcon /></Slot>
        <TrayText $size={20} $w={54} $drop={4}><Fit width={41}>71°F</Fit></TrayText>
        <Slot $w={11} />
        <Slot $w={36}><ChevronIcon /></Slot>
        <Slot $w={37}><SpeakerIcon /></Slot>
        <Slot $w={33}><CloudIcon /></Slot>
        <Slot $w={39}><MicIcon /></Slot>
        <Slot $w={34}><SyncIcon /></Slot>
        <Slot $w={39}><BatteryIcon /></Slot>
        <TrayText $size={18} $w={51} $drop={1}><Fit width={35}>ENG</Fit><Fit width={36}>INTL</Fit></TrayText>
        <TrayText $size={18} $w={105} $drop={1}><Fit width={66}>9:39 PM</Fit><Fit width={85}>3/19/2023</Fit></TrayText>
        <Slot $w={72} $drop={12}><NotificationIcon /></Slot>
        <DesktopEdge />
      </Taskbar>
    </Screen>
  );
}
